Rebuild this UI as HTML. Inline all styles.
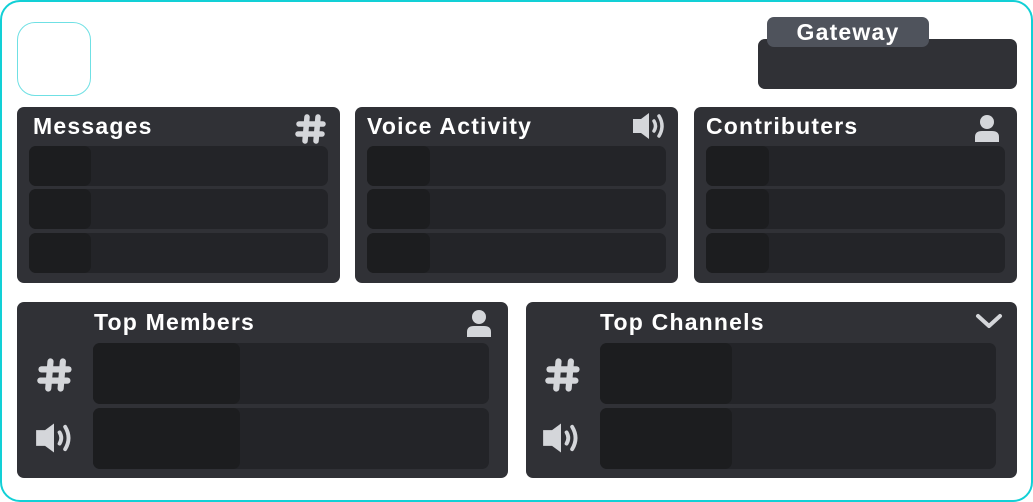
<!DOCTYPE html>
<html><head><style>
*{margin:0;padding:0;box-sizing:border-box}
body{width:1033px;height:502px;background:#fff;position:relative;overflow:hidden;font-family:"Liberation Sans",sans-serif}
.abs{position:absolute}
.outer{left:0;top:0;width:1033px;height:502px;border:2px solid #12d0d6;border-radius:20px}
.sq{left:17px;top:22px;width:74px;height:74px;border:1px solid #6fe0e4;border-radius:18px}
.card{background:#303136;border-radius:7px}
.t{color:#fff;font-weight:bold;font-size:23px;letter-spacing:1.2px;position:absolute}
.row{background:#232428;border-radius:7px;position:absolute}
.in{background:#1c1d1f;border-radius:7px;position:absolute;left:0;top:0;bottom:0}
svg{position:absolute}
</style></head><body>
<div class="abs outer"></div>
<div class="abs sq"></div>
<div class="abs card" style="left:758px;top:39px;width:259px;height:50px;border-radius:7px"></div>
<div class="abs" style="left:767px;top:17px;width:162px;height:30px;background:#4f535c;border-radius:7px;color:#fff;font-weight:bold;font-size:23px;letter-spacing:1.2px;text-align:center;line-height:30px">Gateway</div>

<!-- row 1 -->
<div class="abs card" style="left:17px;top:107px;width:323px;height:176px">
 <div class="t" style="left:16px;top:6px">Messages</div>
 <svg style="left:278px;top:6px" width="32" height="32" viewBox="0 0 32 32"><g stroke="#d4d6da" stroke-width="5.5" stroke-linecap="round"><line x1="12" y1="4" x2="10" y2="28"/><line x1="23" y1="4" x2="21" y2="28"/><line x1="4" y1="11" x2="28" y2="11"/><line x1="3" y1="21" x2="27" y2="21"/></g></svg>
 <div class="row" style="left:12px;top:39px;width:299px;height:40px"><div class="in" style="width:62px"></div></div>
 <div class="row" style="left:12px;top:82px;width:299px;height:40px"><div class="in" style="width:62px"></div></div>
 <div class="row" style="left:12px;top:126px;width:299px;height:40px"><div class="in" style="width:62px"></div></div>
</div>
<div class="abs card" style="left:355px;top:107px;width:323px;height:176px">
 <div class="t" style="left:12px;top:6px">Voice Activity</div>
 <svg style="left:277px;top:4px" width="34" height="30" viewBox="0 0 34 30"><path d="M1 8h8l8-6v26l-8-6H1z" fill="#d4d6da"/><path d="M22 10q3 5 0 10" stroke="#d4d6da" stroke-width="3.5" fill="none" stroke-linecap="round"/><path d="M27 5q6 10 0 20" stroke="#d4d6da" stroke-width="3.5" fill="none" stroke-linecap="round"/></svg>
 <div class="row" style="left:12px;top:39px;width:299px;height:40px"><div class="in" style="width:63px"></div></div>
 <div class="row" style="left:12px;top:82px;width:299px;height:40px"><div class="in" style="width:63px"></div></div>
 <div class="row" style="left:12px;top:126px;width:299px;height:40px"><div class="in" style="width:63px"></div></div>
</div>
<div class="abs card" style="left:694px;top:107px;width:323px;height:176px">
 <div class="t" style="left:12px;top:6px">Contributers</div>
 <svg style="left:280px;top:7px" width="26" height="28" viewBox="0 0 26 28"><circle cx="13" cy="8" r="7" fill="#d4d6da"/><path d="M1 28v-5q0-6 7-6h10q7 0 7 6v5z" fill="#d4d6da"/></svg>
 <div class="row" style="left:12px;top:39px;width:299px;height:40px"><div class="in" style="width:63px"></div></div>
 <div class="row" style="left:12px;top:82px;width:299px;height:40px"><div class="in" style="width:63px"></div></div>
 <div class="row" style="left:12px;top:126px;width:299px;height:40px"><div class="in" style="width:63px"></div></div>
</div>

<!-- row 2 -->
<div class="abs card" style="left:17px;top:302px;width:491px;height:176px">
 <div class="t" style="left:77px;top:7px">Top Members</div>
 <svg style="left:449px;top:7px" width="26" height="28" viewBox="0 0 26 28"><circle cx="13" cy="8" r="7" fill="#d4d6da"/><path d="M1 28v-5q0-6 7-6h10q7 0 7 6v5z" fill="#d4d6da"/></svg>
 <svg style="left:20px;top:55px" width="36" height="36" viewBox="0 0 32 32"><g stroke="#d4d6da" stroke-width="5.5" stroke-linecap="round"><line x1="12" y1="4" x2="10" y2="28"/><line x1="23" y1="4" x2="21" y2="28"/><line x1="4" y1="11" x2="28" y2="11"/><line x1="3" y1="21" x2="27" y2="21"/></g></svg>
 <svg style="left:18px;top:119px" width="38" height="34" viewBox="0 0 34 30"><path d="M1 8h8l8-6v26l-8-6H1z" fill="#d4d6da"/><path d="M22 10q3 5 0 10" stroke="#d4d6da" stroke-width="3.5" fill="none" stroke-linecap="round"/><path d="M27 5q6 10 0 20" stroke="#d4d6da" stroke-width="3.5" fill="none" stroke-linecap="round"/></svg>
 <div class="row" style="left:76px;top:41px;width:396px;height:61px"><div class="in" style="width:147px"></div></div>
 <div class="row" style="left:76px;top:106px;width:396px;height:61px"><div class="in" style="width:147px"></div></div>
</div>
<div class="abs card" style="left:526px;top:302px;width:491px;height:176px">
 <div class="t" style="left:74px;top:7px">Top Channels</div>
 <svg style="left:449px;top:10px" width="28" height="18" viewBox="0 0 28 18"><path d="M3 4l11 10 11-10" stroke="#d4d6da" stroke-width="4" fill="none" stroke-linecap="round" stroke-linejoin="round"/></svg>
 <svg style="left:19px;top:55px" width="36" height="36" viewBox="0 0 32 32"><g stroke="#d4d6da" stroke-width="5.5" stroke-linecap="round"><line x1="12" y1="4" x2="10" y2="28"/><line x1="23" y1="4" x2="21" y2="28"/><line x1="4" y1="11" x2="28" y2="11"/><line x1="3" y1="21" x2="27" y2="21"/></g></svg>
 <svg style="left:16px;top:119px" width="38" height="34" viewBox="0 0 34 30"><path d="M1 8h8l8-6v26l-8-6H1z" fill="#d4d6da"/><path d="M22 10q3 5 0 10" stroke="#d4d6da" stroke-width="3.5" fill="none" stroke-linecap="round"/><path d="M27 5q6 10 0 20" stroke="#d4d6da" stroke-width="3.5" fill="none" stroke-linecap="round"/></svg>
 <div class="row" style="left:74px;top:41px;width:396px;height:61px"><div class="in" style="width:132px"></div></div>
 <div class="row" style="left:74px;top:106px;width:396px;height:61px"><div class="in" style="width:132px"></div></div>
</div>
</body></html>
